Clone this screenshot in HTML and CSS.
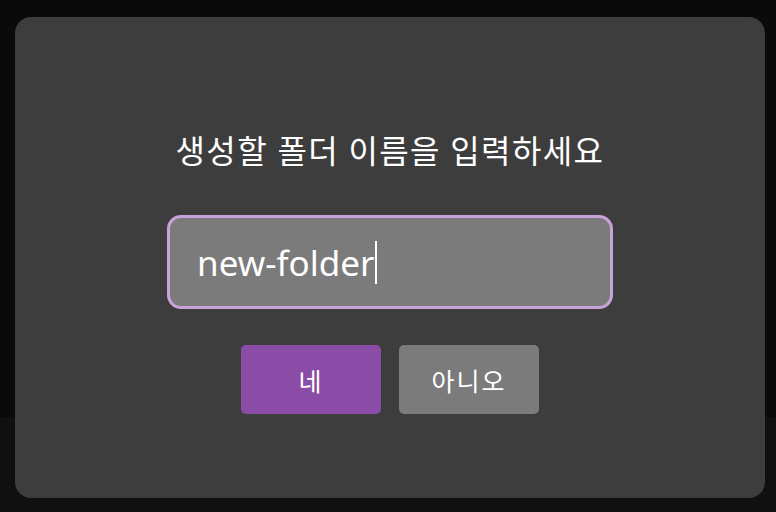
FILE: index.html
```html
<!DOCTYPE html>
<html lang="ko">
<head>
<meta charset="utf-8">
<link rel="stylesheet" href="styles.css">
</head>
<body>
<div class="dialog">
  <h1 class="title">생성할 폴더 이름을 입력하세요</h1>
  <div class="field"><span class="value">new-folder</span><span class="caret"></span></div>
  <div class="actions">
    <button class="btn btn-yes">네</button>
    <button class="btn btn-no">아니오</button>
  </div>
</div>
</body>
</html>
```
FILE: styles.css
```css
html, body {
  margin: 0;
  padding: 0;
}
body {
  width: 776px;
  height: 512px;
  background: linear-gradient(#0a0a0a 0, #0a0a0a 417px, #101010 417px);
  font-family: Roboto, "Noto Sans CJK KR", sans-serif;
  overflow: hidden;
}
.dialog {
  box-sizing: border-box;
  margin: 17px 0 0 15px;
  width: 750px;
  height: 481px;
  background: #3d3d3d;
  border-radius: 16px;
  display: flex;
  flex-direction: column;
  align-items: center;
  padding-top: 115px;
}
.title {
  margin: 0;
  font-size: 32px;
  line-height: 40px;
  letter-spacing: 1.4px;
  font-weight: 400;
  color: #ffffff;
}
.field {
  box-sizing: border-box;
  margin-top: 43px;
  width: 446px;
  height: 94px;
  border: 3px solid #c9a2dc;
  border-radius: 14px;
  background: #7b7b7b;
  display: flex;
  align-items: center;
  padding: 2px 0 0 27px;
  color: #ffffff;
  font-family: "Noto Sans", sans-serif;
  font-size: 35px;
  line-height: 44px;
}
.caret {
  width: 1.5px;
  height: 43px;
  background: #ffffff;
  margin: -2px 0 0 1px;
}
.actions {
  margin-top: 36px;
  display: flex;
  gap: 18px;
}
.btn {
  width: 140px;
  height: 69px;
  border: none;
  border-radius: 5px;
  color: #ffffff;
  font-family: inherit;
  font-size: 25px;
  letter-spacing: 2px;
  padding: 0;
}
.btn-yes { background: #8b4ca8; }
.btn-no { background: #7b7b7b; }
```
